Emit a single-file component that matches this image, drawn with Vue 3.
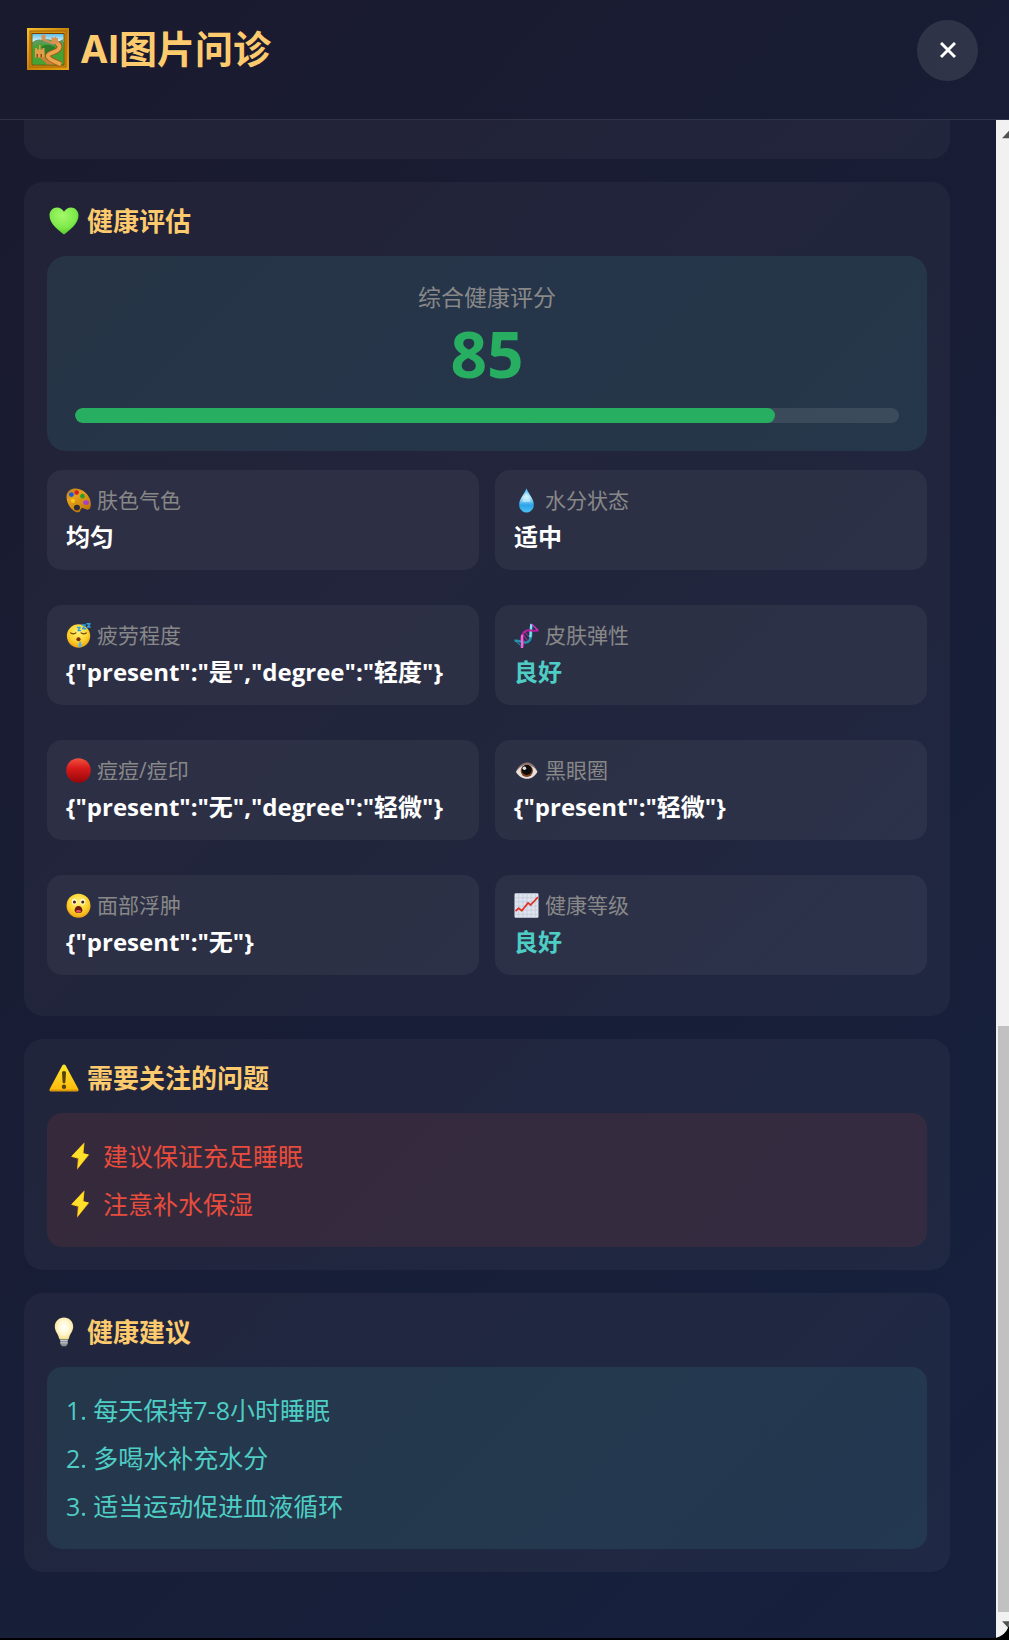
<template>
  <div class="diagnosis-modal">
    <!-- Icon sprite -->
    <svg class="sprite" width="0" height="0" aria-hidden="true">
      <defs>
        <linearGradient id="g-gold" x1="0" y1="0" x2="1" y2="1">
          <stop offset="0" stop-color="#f7c32e" />
          <stop offset="0.5" stop-color="#c98208" />
          <stop offset="1" stop-color="#e8a413" />
        </linearGradient>
        <linearGradient id="g-sky" x1="0" y1="0" x2="0" y2="1">
          <stop offset="0" stop-color="#5fc0ea" />
          <stop offset="1" stop-color="#eaf8fb" />
        </linearGradient>
        <radialGradient id="g-heart" cx="0.45" cy="0.3" r="0.75">
          <stop offset="0" stop-color="#a4f96a" />
          <stop offset="0.6" stop-color="#7ee94a" />
          <stop offset="1" stop-color="#4cc41f" />
        </radialGradient>
        <linearGradient id="g-warn" x1="0" y1="0" x2="0" y2="1">
          <stop offset="0" stop-color="#ffe630" />
          <stop offset="1" stop-color="#fdb90a" />
        </linearGradient>
        <radialGradient id="g-bulb" cx="0.5" cy="0.45" r="0.55">
          <stop offset="0" stop-color="#ffffff" />
          <stop offset="0.6" stop-color="#fff6cf" />
          <stop offset="1" stop-color="#f5df86" />
        </radialGradient>
        <linearGradient id="g-palette" x1="0" y1="0" x2="0.6" y2="1">
          <stop offset="0" stop-color="#b9791b" />
          <stop offset="0.4" stop-color="#e5a11c" />
          <stop offset="1" stop-color="#c07b0a" />
        </linearGradient>
        <linearGradient id="g-drop" x1="0" y1="0" x2="0" y2="1">
          <stop offset="0" stop-color="#37b3f2" />
          <stop offset="0.35" stop-color="#b8ebfd" />
          <stop offset="0.7" stop-color="#2ba4ea" />
          <stop offset="1" stop-color="#4fc0f2" />
        </linearGradient>
        <radialGradient id="g-face" cx="0.5" cy="0.35" r="0.68">
          <stop offset="0" stop-color="#fff27a" />
          <stop offset="0.6" stop-color="#fdd22c" />
          <stop offset="1" stop-color="#ee9a10" />
        </radialGradient>
        <linearGradient id="g-red" x1="0" y1="0" x2="0" y2="1">
          <stop offset="0" stop-color="#f2523f" />
          <stop offset="0.4" stop-color="#d81b1b" />
          <stop offset="1" stop-color="#96060a" />
        </linearGradient>
        <linearGradient id="g-dna" x1="0" y1="1" x2="1" y2="0">
          <stop offset="0" stop-color="#f04ad8" />
          <stop offset="1" stop-color="#c21fb4" />
        </linearGradient>
      </defs>

      <symbol id="icon-picture" viewBox="0 0 42 42">
        <rect width="42" height="42" fill="url(#g-gold)" />
        <rect x="2.500" y="2.500" width="37" height="37" fill="#a56204" />
        <rect x="3.500" y="3.500" width="35" height="35" fill="#d89310" />
        <rect x="4.500" y="5" width="33" height="32.500" fill="#6e3f07" />
        <rect x="5.500" y="6" width="31" height="30.500" fill="#4ca436" />
        <path d="M5.500 6h31v8h-31z" fill="url(#g-sky)" />
        <path d="M5.500 14c4-3 7-3 10-2 5-2 12 1 15 2l6-3v9h-31z" fill="#5f9a5c" />
        <path d="M5.500 19c6-5 14-4 19 0 4-3 8-3 12-1v18.500h-31z" fill="#46a232" />
        <path d="M14 19c5-4 13-2 15 2-1 4-6 5-9 8z" fill="#2f7d2a" />
        <path d="M30 15c5 4 2 7-3 9s-8 3-5 6 7 4 12 6.500" fill="none" stroke="#9c5a1e" stroke-width="5.500" />
        <path d="M30 15c5 4 2 7-3 9s-8 3-5 6 7 4 12 6.500" fill="none" stroke="#eda24c" stroke-width="3.800" />
        <path d="M16 28c3 3 6 6 12 8.500h-8c-2-3-5-5-8-7z" fill="#c97f38" />
        <path d="M16 11.500l9 3.500" stroke="#d18e55" stroke-width="2" />
        <path d="M14.500 7h4v5h-4zM24.500 9h1.500v1h1.500V9H29v1h2v6h-6.500z" fill="#dc9150" />
        <path d="M8 20h2v1.500h2V17h1.500v4.500h2V20h2v9.500H8z" fill="#e59c48" />
        <path d="M9.500 29.500V26h1.500v3.500zM13.500 29.500V26H15v3.500z" fill="#8a4c18" />
      </symbol>

      <symbol id="icon-heart" viewBox="0 0 30 30">
        <path d="M15 28.500C10 24.500.5 18 .5 9.500.5 4.800 4 1.500 8 1.500c3 0 5.500 1.700 7 4.300 1.500-2.600 4-4.300 7-4.300 4 0 7.500 3.300 7.500 8C29.500 18 20 24.500 15 28.500z" fill="url(#g-heart)" />
      </symbol>

      <symbol id="icon-warning" viewBox="0 0 30 30">
        <path d="M13.300 2.600c.8-1.500 2.600-1.500 3.400 0L29.300 26c.7 1.400 0 2.300-1.400 2.300H2.100C.7 28.300 0 27.400.7 26z" fill="url(#g-warn)" />
        <path d="M1 26.500h28c.2 1-.3 1.800-1.200 1.800H2.200c-.9 0-1.400-.8-1.200-1.800z" fill="#dd9a08" />
        <path d="M13 9.800c-.1-1.200.8-1.900 2-1.900s2.100.7 2 1.900l-.6 9.200c-.1.900-.6 1.400-1.400 1.400s-1.300-.5-1.400-1.400z" fill="#54430f" />
        <circle cx="15" cy="23.800" r="2.200" fill="#54430f" />
      </symbol>

      <symbol id="icon-bulb" viewBox="0 0 30 30">
        <path d="M15 .5c5.300 0 9.200 4 9.200 9 0 4.600-3 6.700-4.200 11.500-.2 1-.8 1.600-1.800 1.600h-6.400c-1 0-1.600-.6-1.800-1.600C8.800 16.200 5.800 14.100 5.800 9.500c0-5 3.900-9 9.200-9z" fill="url(#g-bulb)" />
        <path d="M11.300 22.400h7.400v4.600l-1.700 2.300h-4L11.300 27z" fill="#8d8f96" />
        <path d="M11.300 23.500h7.400M11.300 25.800h7.400" stroke="#d0d2d8" stroke-width="0.900" />
      </symbol>

      <symbol id="icon-bolt" viewBox="0 0 28 28">
        <path d="M18.500.3L5 14.800l6.800 2L11 27.800 23.200 12.800l-5.500-1.600z" fill="#f0a40e" />
        <path d="M18 1.200L5.500 14.300l7.400 1.900-1.400 10.300L22.600 12.600l-6-1.300z" fill="#ffe02a" />
      </symbol>

      <symbol id="icon-palette" viewBox="0 0 24 24">
        <path d="M6.500.8C12-.8 19.500 3 22.500 9.500c1.500 3.500 1.800 7.500.5 10-1.200 2-3.500 1.600-5.300.3-1.700-1.200-3.400-.5-3.800 1.200-.4 2-1.700 2.800-3.700 2.200C4.500 21.200.5 14.500.5 8.500c0-3.800 2.200-6.600 6-7.700z" fill="url(#g-palette)" />
        <ellipse cx="10.500" cy="18.800" rx="2.900" ry="2.700" fill="#2c2b36" />
        <circle cx="5.200" cy="6.300" r="2.300" fill="#1c57d8" />
        <circle cx="10.200" cy="4.300" r="2.200" fill="#d3202a" />
        <circle cx="15.800" cy="7.800" r="2.200" fill="#2c9c2b" />
        <ellipse cx="19.300" cy="14" rx="2.700" ry="2.200" fill="#a63fd0" />
        <circle cx="6.700" cy="12.300" r="2" fill="#fbc514" />
      </symbol>

      <symbol id="icon-drop" viewBox="0 0 24 24">
        <path d="M12 .3c1.700 5.300 7 9.800 7 15.700 0 4.300-3 7.600-7 7.600s-7-3.300-7-7.600C5 10.100 10.300 5.600 12 .3z" fill="url(#g-drop)" />
        <path d="M12 4c1.500 3.500 3.800 6 3.800 9.500H8.200C8.200 10 10.500 7.500 12 4z" fill="#e8f9ff" opacity="0.5" />
      </symbol>

      <symbol id="icon-sleepy" viewBox="0 0 24 24">
        <circle cx="12" cy="12.500" r="11.200" fill="url(#g-face)" />
        <path d="M4.500 9.500c1 1.200 3.800 1.200 5 0M14.500 9.500c1.200 1.200 4 1.200 5 0" fill="none" stroke="#6a3c0a" stroke-width="1.200" stroke-linecap="round" />
        <ellipse cx="12" cy="15.500" rx="2" ry="1.900" fill="#7d2a14" />
        <path d="M13.500 17c1.500 2.500 2.200 6-.1 6.300-2.200 0-1.500-3.500.1-6.300z" fill="#48b8ea" />
        <path d="M10.500 4.300h3l-2 3h3M15 2h3.500l-2.500 3.500h3.500M19.500 .8H23l-2.300 3h3" fill="none" stroke="#2f9fe0" stroke-width="1.400" stroke-linejoin="round" />
      </symbol>

      <symbol id="icon-dna" viewBox="0 0 24 24">
        <path d="M8 10l6 8M10 8l6 7M7 13l4 6M13 6l4 6" stroke="#83308f" stroke-width="1.200" />
        <path d="M.5 17c6-1 8 4 13 1 5-3.500 2-11 3.500-17" fill="none" stroke="#2494ad" stroke-width="2.300" />
        <path d="M16.700 1c-1 4.500-.2 9-1.200 12.500" fill="none" stroke="#79e8f2" stroke-width="2.200" />
        <path d="M7.500 24c1.500-5-1.500-12 2.500-15.500C14.500 4.500 17 9 23.500 7" fill="none" stroke="#b8209f" stroke-width="2" />
        <path d="M7.500 24c1.200-4-.8-8.500.5-12.500" fill="none" stroke="#fa62df" stroke-width="2.300" />
        <path d="M17 1l6 6" stroke="url(#g-dna)" stroke-width="1.200" />
        <path d="M1 17l6 5" stroke="#2494ad" stroke-width="1" />
      </symbol>

      <symbol id="icon-red" viewBox="0 0 24 24">
        <circle cx="12" cy="12" r="11.800" fill="url(#g-red)" />
      </symbol>

      <symbol id="icon-eye" viewBox="0 0 24 24">
        <path d="M1.800 13.500C4.500 8 8 5 12.800 5c4.500 0 7.600 3.500 9.700 8.200-2 4-5.500 6.800-10 6.800-4.600 0-8-2.500-10.700-6.500z" fill="#e9dfdd" />
        <path d="M1.800 13.500C4.500 8 8 4.300 12.800 4.300c4.500 0 7.600 4 9.700 8.900C20 9 16.500 6.800 12.500 6.800c-4.200 0-7.700 2.500-10.700 6.700z" fill="#8c7571" />
        <circle cx="12.300" cy="12.300" r="5.900" fill="#7c421c" />
        <circle cx="12.300" cy="11.600" r="4.800" fill="#0d0a0a" />
        <circle cx="10" cy="9.800" r="1.700" fill="#d9e2ea" />
      </symbol>

      <symbol id="icon-surprised" viewBox="0 0 24 24">
        <circle cx="12" cy="12.200" r="11.500" fill="url(#g-face)" />
        <ellipse cx="8" cy="8.300" rx="2.300" ry="2.900" fill="#fffbe8" />
        <ellipse cx="16.200" cy="8.300" rx="2.300" ry="2.900" fill="#fffbe8" />
        <circle cx="8.100" cy="8.600" r="1.500" fill="#4b250c" />
        <circle cx="16.100" cy="8.600" r="1.500" fill="#4b250c" />
        <path d="M12 12.500c2.200 0 3.700 2 3.700 4 0 1.900-1.600 2.700-3.700 2.700s-3.700-.8-3.700-2.700c0-2 1.500-4 3.700-4z" fill="#6b1c10" />
        <ellipse cx="12" cy="17.600" rx="2.500" ry="1.400" fill="#e8536a" />
      </symbol>

      <symbol id="icon-chart" viewBox="0 0 24 24">
        <rect x="0.500" y="0.300" width="23" height="23.500" rx="1.200" fill="#dfe4ee" />
        <path d="M4.500.5v23M8.500.5v23M12.500.5v23M16.500.5v23M20.500.5v23M.5 4.500h23M.5 8.500h23M.5 12.500h23M.5 16.500h23M.5 20.500h23" stroke="#bcc5d6" stroke-width="0.600" />
        <path d="M1.500 17.500l3-3 3 2.500 6-7.500 2.500 2 7-7.500" fill="none" stroke="#dd3327" stroke-width="1.700" stroke-linejoin="round" />
      </symbol>
    </svg>

    <header class="modal-header">
      <h1 class="modal-title">
        <svg class="title-icon" aria-hidden="true"><use href="#icon-picture" /></svg>
        <span>AI图片问诊</span>
      </h1>
      <button class="close-btn" type="button" aria-label="关闭">
        <svg viewBox="0 0 16 18" aria-hidden="true">
          <path d="M1 1l14 14M15 1L1 15" fill="none" stroke="currentColor" stroke-width="3" />
        </svg>
      </button>
    </header>

    <div class="modal-body">
      <main class="result">
        <div class="card card-previous"></div>

        <section class="card card-health">
          <h2 class="card-title">
            <svg class="card-icon" aria-hidden="true"><use href="#icon-heart" /></svg>
            <span>健康评估</span>
          </h2>
          <div class="score-box">
            <div class="score-label">综合健康评分</div>
            <div class="score-value">{{ score }}</div>
            <div class="score-bar">
              <div class="score-fill" :style="{ width: score + '%' }"></div>
            </div>
          </div>
          <div class="metric-grid">
            <div v-for="item in metrics" :key="item.label" class="metric">
              <div class="metric-label">
                <svg class="metric-icon" aria-hidden="true"><use :href="'#icon-' + item.icon" /></svg>
                <span>{{ item.label }}</span>
              </div>
              <div class="metric-value" :class="{ good: item.good }">{{ item.value }}</div>
            </div>
          </div>
        </section>

        <section class="card">
          <h2 class="card-title">
            <svg class="card-icon" aria-hidden="true"><use href="#icon-warning" /></svg>
            <span>需要关注的问题</span>
          </h2>
          <ul class="note-list concerns">
            <li v-for="text in concerns" :key="text">
              <svg class="bolt-icon" aria-hidden="true"><use href="#icon-bolt" /></svg>
              <span>{{ text }}</span>
            </li>
          </ul>
        </section>

        <section class="card">
          <h2 class="card-title">
            <svg class="card-icon" aria-hidden="true"><use href="#icon-bulb" /></svg>
            <span>健康建议</span>
          </h2>
          <ul class="note-list advice">
            <li v-for="(text, i) in suggestions" :key="text">{{ i + 1 }}. {{ text }}</li>
          </ul>
        </section>
      </main>

      <div class="scrollbar" aria-hidden="true">
        <svg class="scroll-arrow" viewBox="0 0 17 17"><path d="M4 12l4.500-5 4.500 5z" fill="#505050" /></svg>
        <div class="scroll-track">
          <div class="scroll-thumb"></div>
        </div>
        <svg class="scroll-arrow" viewBox="0 0 17 17"><path d="M4 6l4.500 5L13 6z" fill="#505050" /></svg>
      </div>
    </div>
  </div>
</template>

<script setup>
import { ref } from 'vue'

const score = ref(85)

const metrics = ref([
  { icon: 'palette', label: '肤色气色', value: '均匀' },
  { icon: 'drop', label: '水分状态', value: '适中' },
  { icon: 'sleepy', label: '疲劳程度', value: '{"present":"是","degree":"轻度"}' },
  { icon: 'dna', label: '皮肤弹性', value: '良好', good: true },
  { icon: 'red', label: '痘痘/痘印', value: '{"present":"无","degree":"轻微"}' },
  { icon: 'eye', label: '黑眼圈', value: '{"present":"轻微"}' },
  { icon: 'surprised', label: '面部浮肿', value: '{"present":"无"}' },
  { icon: 'chart', label: '健康等级', value: '良好', good: true },
])

const concerns = ref(['建议保证充足睡眠', '注意补水保湿'])

const suggestions = ref(['每天保持7-8小时睡眠', '多喝水补充水分', '适当运动促进血液循环'])
</script>

<style>
body {
  margin: 0;
  background: #000;
}
</style>

<style scoped>
.diagnosis-modal {
  box-sizing: border-box;
  display: flex;
  flex-direction: column;
  min-height: calc(100vh - 2px);
  overflow: hidden;
  border-radius: 0 0 16px 0;
  background: linear-gradient(135deg, #1a1a2e 0%, #16213e 100%);
  color: #fff;
  font-family: 'Open Sans', 'Noto Sans CJK SC', sans-serif;
}

.sprite {
  display: block;
}

.modal-header {
  display: flex;
  justify-content: space-between;
  align-items: flex-start;
  padding: 20px 31px 38px 27px;
  border-bottom: 1px solid rgba(255, 255, 255, 0.1);
}

.modal-title {
  display: flex;
  align-items: center;
  gap: 11px;
  margin: 0;
  color: #fdcb6e;
  font-family: Inter, 'Noto Sans CJK SC', sans-serif;
  font-size: 38px;
  font-weight: 700;
  line-height: 58px;
}

.title-icon {
  width: 42px;
  height: 42px;
}

.close-btn {
  display: flex;
  align-items: center;
  justify-content: center;
  width: 61px;
  height: 61px;
  padding: 0;
  border: none;
  border-radius: 50%;
  background: rgba(255, 255, 255, 0.1);
  color: #fff;
  cursor: pointer;
}

.close-btn svg {
  width: 16px;
  height: 18px;
}

.modal-body {
  display: flex;
  flex: 1;
}

.result {
  flex: 1;
  min-width: 0;
  padding: 0 46px 60px 24px;
}

.card {
  margin-bottom: 23px;
  padding: 23px;
  border-radius: 19px;
  background: rgba(255, 255, 255, 0.04);
}

.card:last-child {
  margin-bottom: 0;
}

.card-previous {
  height: 16px;
  padding-top: 0;
  border-radius: 0 0 19px 19px;
}

.card-health {
  padding-bottom: 41px;
}

.card-title {
  display: flex;
  align-items: center;
  gap: 8px;
  margin: 0 0 19px;
  padding-left: 2px;
  color: #fdcb6e;
  font-size: 26px;
  font-weight: 700;
  line-height: 32px;
}

.card-icon {
  width: 30px;
  height: 30px;
}

.score-box {
  margin-bottom: 19px;
  padding: 28px;
  border-radius: 19px;
  background: rgba(78, 205, 196, 0.1);
  text-align: center;
}

.score-label {
  color: #888;
  font-size: 23px;
  line-height: 26px;
}

.score-value {
  margin-bottom: 10px;
  color: #27ae60;
  font-size: 64px;
  font-weight: 700;
  line-height: 88px;
}

.score-bar {
  height: 15px;
  overflow: hidden;
  border-radius: 8px;
  background: rgba(255, 255, 255, 0.1);
}

.score-fill {
  height: 100%;
  border-radius: 8px;
  background: #27ae60;
}

.metric-grid {
  display: grid;
  grid-template-columns: 1fr 1fr;
  gap: 35px 16px;
}

.metric {
  padding: 15px 19px;
  border-radius: 15px;
  background: rgba(255, 255, 255, 0.05);
}

.metric-label {
  display: flex;
  align-items: center;
  gap: 6px;
  margin-bottom: 4px;
  color: #888;
  font-size: 21px;
  line-height: 30px;
}

.metric-icon {
  width: 25px;
  height: 25px;
}

.metric-value {
  font-size: 24px;
  font-weight: 700;
  line-height: 36px;
}

.metric-value.good {
  color: #4ecdc4;
}

.note-list {
  margin: 0;
  padding: 19px;
  border-radius: 15px;
  font-size: 25px;
  line-height: 48px;
  list-style: none;
}

.note-list li {
  display: flex;
  align-items: center;
  gap: 9px;
}

.concerns {
  background: rgba(231, 76, 60, 0.1);
  color: #e74c3c;
}

.advice {
  background: rgba(78, 205, 196, 0.1);
  color: #4ecdc4;
}

.bolt-icon {
  width: 28px;
  height: 28px;
}

.scrollbar {
  display: flex;
  flex-direction: column;
  width: 13px;
  overflow: hidden;
  background: #f1f1f1;
}

.scroll-arrow {
  flex: none;
  width: 26px;
  height: 26px;
}

.scroll-track {
  display: flex;
  flex: 1;
  flex-direction: column;
  justify-content: flex-end;
}

.scroll-thumb {
  height: 40%;
  margin-left: 2px;
  background: #c1c1c1;
}
</style>
